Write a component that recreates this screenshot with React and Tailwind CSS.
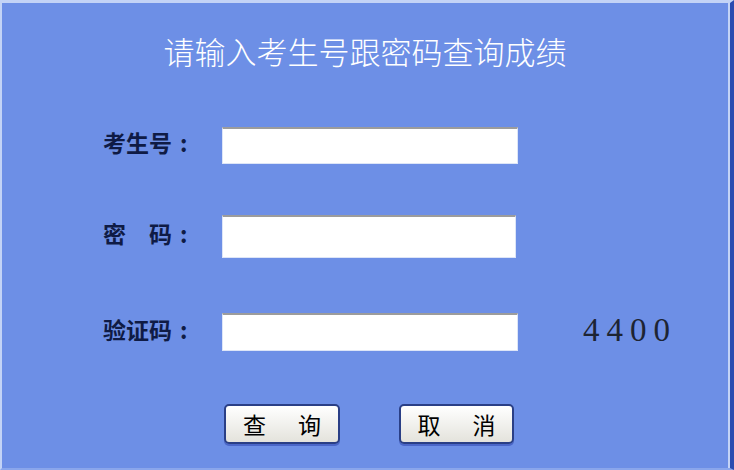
export default function App() {
  const labelCls =
    "w-[119px] shrink-0 flex items-center text-[23px] font-bold text-[#0f1b45] leading-none mb-[6px]";
  const inputCls =
    "bg-white border border-[#dde5f7] border-t-2 border-t-[#9c9c9c] outline-none px-2 text-base text-black";

  const Label = ({ children }) => (
    <span className={labelCls}>
      <span>{children}</span>
      <span className="ml-[8px]">:</span>
    </span>
  );

  return (
    <div
      className="w-[734px] h-[470px] bg-[#6d8fe6] border-l-2 border-t-[3px] border-l-[#c3d3f6] border-t-[#c3d3f6] border-r-[4px] border-r-[#2b4bb0] border-b-2 border-b-[#8aa6ec] overflow-hidden"
      style={{ fontFamily: '"Noto Sans CJK SC", "Noto Sans", sans-serif' }}
    >
      <div className="h-full border-r-2 border-r-[#c3d3f6] flex flex-col">
        {/* TITLE */}
        <h1 className="mt-[29px] h-[38px] leading-[38px] text-center text-[31px] font-light text-white">
          请输入考生号跟密码查询成绩
        </h1>

        {/* ROW 1 */}
        <div className="mt-[57px] h-[37px] flex items-center pl-[101px]">
          <Label>考生号</Label>
          <input className={`${inputCls} w-[296px] h-[37px]`} />
        </div>

        {/* ROW 2 */}
        <div className="mt-[51px] h-[43px] flex items-center pl-[101px]">
          <Label>密　码</Label>
          <input type="password" className={`${inputCls} w-[294px] h-[43px]`} />
        </div>

        {/* ROW 3 */}
        <div className="mt-[55px] h-[38px] flex items-center pl-[101px]">
          <Label>验证码</Label>
          <input className={`${inputCls} w-[296px] h-[38px]`} />
          <span
            className="ml-[65px] mb-[4px] text-[33px] leading-none tracking-[7px] text-[#1d2433]"
            style={{ fontFamily: '"Liberation Serif", serif' }}
          >
            4400
          </span>
        </div>

        {/* BUTTONS */}
        <div className="mt-[53px] flex pl-[222px] gap-[59px]">
          <button className="w-[116px] h-[40px] rounded-[5px] border-2 border-[#2a3f86] bg-gradient-to-b from-white to-[#e4e3dc] shadow-[0_2px_0_#4a66c8] flex items-center justify-center gap-[32px] text-[23px] text-black leading-none">
            <span>查</span>
            <span>询</span>
          </button>
          <button className="w-[115px] h-[40px] rounded-[5px] border-2 border-[#2a3f86] bg-gradient-to-b from-white to-[#e4e3dc] shadow-[0_2px_0_#4a66c8] flex items-center justify-center gap-[32px] text-[23px] text-black leading-none">
            <span>取</span>
            <span>消</span>
          </button>
        </div>
      </div>
    </div>
  );
}
